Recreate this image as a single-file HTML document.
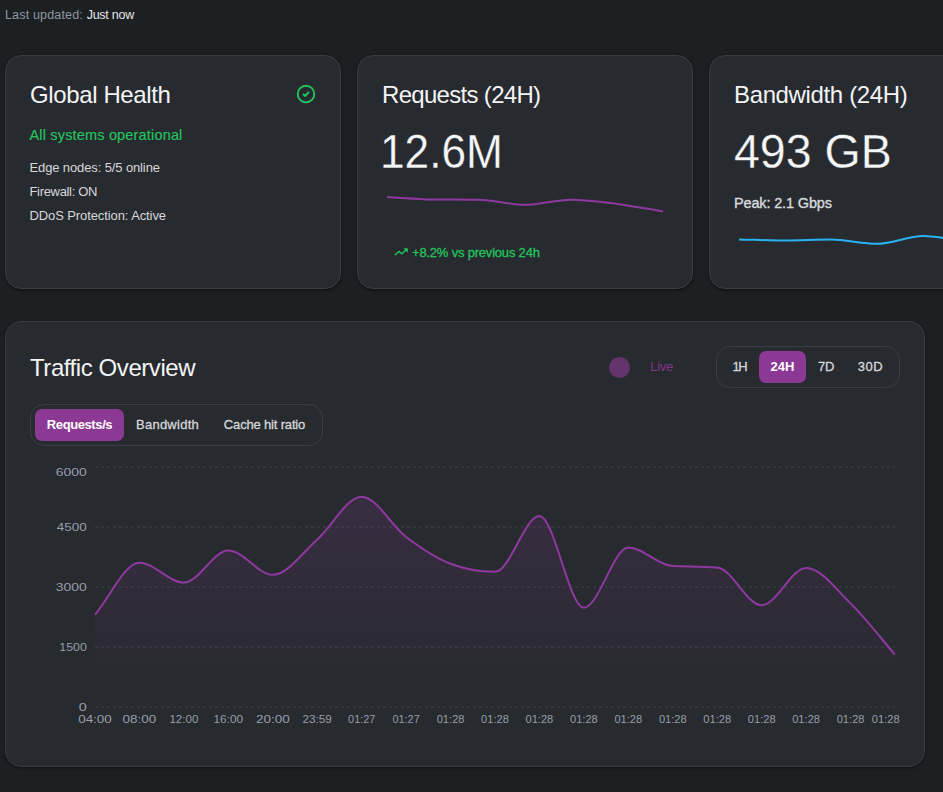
<!DOCTYPE html>
<html lang="en">
<head>
<meta charset="utf-8">
<title>Edge Dashboard</title>
<style>
*{box-sizing:border-box;margin:0;padding:0}
html,body{width:943px;height:792px;overflow:hidden;background:#1c2023}
body{font-family:"Liberation Sans",sans-serif;color:#eceef1;position:relative}
.abs{position:absolute;white-space:nowrap;line-height:1}
.updated{left:5px;top:8.6px;font-size:12.5px;color:#8f97a1;letter-spacing:.17px}
.updated b{font-weight:400;color:#e3e5e8;letter-spacing:-.25px}
.card{position:absolute;top:55px;width:336px;height:234px;background:#272a2f;border:1px solid #393c43;border-radius:16px;box-shadow:0 1px 2px rgba(0,0,0,.3),0 1px 3px 1px rgba(0,0,0,.15)}
.card h2,.panel h2{position:absolute;font-weight:400;color:#f3f4f6;white-space:nowrap;line-height:1}
.big{position:absolute;white-space:nowrap;line-height:1;color:#f5f6f8;font-weight:400;-webkit-text-stroke:.3px #272a2f}
.panel{position:absolute;left:5px;top:321px;width:920px;height:446px;background:#272a2f;border:1px solid #393c43;border-radius:16px;box-shadow:0 1px 2px rgba(0,0,0,.3),0 1px 3px 1px rgba(0,0,0,.15)}
.seg{position:absolute;height:42px;border:1px solid #3b3e45;border-radius:14px;background:#272a2f}
.seg span{position:absolute;top:4px;height:32px;line-height:32px;text-align:center;font-size:13px;color:#d6d8dc;border-radius:7px;white-space:nowrap;-webkit-text-stroke:.3px #d6d8dc}
.seg span.on{background:#8c3996;color:#fff;font-weight:700;-webkit-text-stroke:0}
svg{position:absolute;left:0;top:0;overflow:visible}
.tick{font-size:11.6px;fill:#969eaa;font-family:"Liberation Sans",sans-serif}
</style>
</head>
<body>
<div class="abs updated">Last updated: <b>Just now</b></div>

<!-- Card 1 -->
<div class="card" style="left:5px">
  <h2 style="left:24px;top:27px;font-size:24px;letter-spacing:-.38px">Global Health</h2>
  <svg width="24" height="24" viewBox="-12 -12 24 24" style="left:288px;top:25.8px" fill="none" stroke="#22c55e" stroke-linecap="round" stroke-linejoin="round"><circle cx="0" cy="0" r="8.3" stroke-width="1.85"/><path d="M-2.4 .5L-.8 2L2.5 -1.6" stroke-width="1.95"/></svg>
  <div class="abs" style="left:23.5px;top:71.6px;font-size:14.5px;letter-spacing:.17px;color:#22c55e;-webkit-text-stroke:.15px #22c55e">All systems operational</div>
  <div class="abs" style="left:23.5px;top:105px;font-size:13px;letter-spacing:-.12px;color:#d6d8dc">Edge nodes: 5/5 online</div>
  <div class="abs" style="left:23.5px;top:129px;font-size:13px;letter-spacing:-.33px;color:#d6d8dc">Firewall: ON</div>
  <div class="abs" style="left:23.5px;top:153px;font-size:13px;letter-spacing:-.1px;color:#d6d8dc">DDoS Protection: Active</div>
</div>

<!-- Card 2 -->
<div class="card" style="left:357px">
  <h2 style="left:24px;top:27px;font-size:24px;letter-spacing:-.69px">Requests (24H)</h2>
  <div class="big" style="left:21.8px;top:71px;font-size:49px;transform:scaleX(.903);transform-origin:0 0">12.6M</div>
  <div class="abs" style="left:54px;top:189.5px;font-size:13px;letter-spacing:-.2px;color:#22c55e;-webkit-text-stroke:.3px #22c55e">+8.2% vs previous 24h</div>
</div>

<!-- Card 3 -->
<div class="card" style="left:709px">
  <h2 style="left:24px;top:27px;font-size:24px;letter-spacing:-.36px">Bandwidth (24H)</h2>
  <div class="big" style="left:24.3px;top:71px;font-size:49px;transform:scaleX(.949);transform-origin:0 0">493 GB</div>
  <div class="abs" style="left:24px;top:140px;font-size:14.5px;letter-spacing:-.15px;color:#d8dade;-webkit-text-stroke:.35px #d8dade">Peak: 2.1 Gbps</div>
</div>

<!-- Traffic panel -->
<div class="panel">
  <h2 style="left:24px;top:34px;font-size:24px;letter-spacing:-.43px">Traffic Overview</h2>
  <div class="abs" style="left:603px;top:35px;width:21px;height:21px;border-radius:50%;background:#64346d"></div>
  <div class="abs" style="left:644.3px;top:37.6px;font-size:13px;letter-spacing:-.3px;color:#84378d">Live</div>
  <div class="seg" style="left:710px;top:24px;width:184px">
    <span style="left:4px;width:38px;letter-spacing:-1.5px;text-indent:-1.5px">1H</span>
    <span class="on" style="left:42px;width:47px">24H</span>
    <span style="left:89px;width:40px;letter-spacing:-.4px">7D</span>
    <span style="left:129px;width:49px;letter-spacing:.6px">30D</span>
  </div>
  <div class="seg" style="left:24px;top:82px;width:293px">
    <span class="on" style="left:4px;width:89px;letter-spacing:-.4px">Requests/s</span>
    <span style="left:93px;width:87px;letter-spacing:.26px">Bandwidth</span>
    <span style="left:180px;width:107px;letter-spacing:-.17px">Cache hit ratio</span>
  </div>
</div>

<!-- Overlay SVG: sparklines + main chart (page coordinates) -->
<svg width="943" height="792" viewBox="0 0 943 792">
  <defs>
    <linearGradient id="g" x1="0" y1="466" x2="0" y2="698" gradientUnits="userSpaceOnUse">
      <stop offset="0" stop-color="#993bab" stop-opacity=".175"/>
      <stop offset="1" stop-color="#993bab" stop-opacity="0"/>
    </linearGradient>
  </defs>
  <path id="sp1" fill="none" stroke="#8f39a0" stroke-width="2" stroke-linecap="butt" d="M387.00 196.90 C402.33 197.73 417.67 199.26 433.00 199.40 C448.33 199.54 463.67 199.43 479.00 199.70 C494.33 199.97 509.67 204.80 525.00 204.80 C540.33 204.80 555.67 199.70 571.00 199.70 C586.33 199.70 601.67 201.93 617.00 203.90 C632.33 205.87 647.67 208.97 663.00 211.50"/>
  <path id="sp2" fill="none" stroke="#29b3f4" stroke-width="2" d="M739.00 239.40 C754.33 239.77 769.67 240.50 785.00 240.50 C800.33 240.50 815.67 239.60 831.00 239.60 C846.33 239.60 861.67 243.80 877.00 243.80 C892.33 243.80 907.67 236.10 923.00 236.10 C938.33 236.10 953.67 240.50 969.00 240.50 C984.33 240.50 999.67 238.83 1015.00 238.00"/>
  <!-- trending up icon -->
  <g><path fill="none" stroke="#22c55e" stroke-width="1.4" stroke-linecap="round" stroke-linejoin="round" d="M395.3 254.7L398.8 251.4L401.8 253.8L406 249.9"/><path fill="#22c55e" d="M403.4 248.3H407.8V252.7Z"/></g>
  <!-- grid -->
  <g stroke="#32353c" stroke-width="2" stroke-dasharray="3 3" fill="none">
    <path d="M95 467H895M95 527H895M95 587H895M95 647H895M95 707H895"/>
  </g>
  <path fill="url(#g)" d="M95.00 614.70 C109.81 597.40 124.63 562.80 139.44 562.80 C154.26 562.80 169.07 582.60 183.89 582.60 C198.70 582.60 213.52 550.40 228.33 550.40 C243.15 550.40 257.96 574.80 272.78 574.80 C287.59 574.80 302.41 552.52 317.22 539.50 C332.04 526.48 346.85 496.70 361.67 496.70 C376.48 496.70 391.30 525.82 406.11 537.00 C420.93 548.18 435.74 558.00 450.56 563.80 C465.37 569.60 480.19 571.80 495.00 571.80 C509.81 571.80 524.63 516.10 539.44 516.10 C554.26 516.10 569.07 607.70 583.89 607.70 C598.70 607.70 613.52 547.60 628.33 547.60 C643.15 547.60 657.96 565.37 672.78 566.00 C687.59 566.63 702.41 566.15 717.22 567.40 C732.04 568.65 746.85 605.20 761.67 605.20 C776.48 605.20 791.30 568.00 806.11 568.00 C820.93 568.00 835.74 588.97 850.56 603.40 C865.37 617.83 880.19 637.53 895.00 654.60 L895 706.5 L95 706.5 Z"/>
  <path fill="none" stroke="#8f39a0" stroke-width="2" stroke-linejoin="round" d="M95.00 614.70 C109.81 597.40 124.63 562.80 139.44 562.80 C154.26 562.80 169.07 582.60 183.89 582.60 C198.70 582.60 213.52 550.40 228.33 550.40 C243.15 550.40 257.96 574.80 272.78 574.80 C287.59 574.80 302.41 552.52 317.22 539.50 C332.04 526.48 346.85 496.70 361.67 496.70 C376.48 496.70 391.30 525.82 406.11 537.00 C420.93 548.18 435.74 558.00 450.56 563.80 C465.37 569.60 480.19 571.80 495.00 571.80 C509.81 571.80 524.63 516.10 539.44 516.10 C554.26 516.10 569.07 607.70 583.89 607.70 C598.70 607.70 613.52 547.60 628.33 547.60 C643.15 547.60 657.96 565.37 672.78 566.00 C687.59 566.63 702.41 566.15 717.22 567.40 C732.04 568.65 746.85 605.20 761.67 605.20 C776.48 605.20 791.30 568.00 806.11 568.00 C820.93 568.00 835.74 588.97 850.56 603.40 C865.37 617.83 880.19 637.53 895.00 654.60"/>
  <g class="tick" text-anchor="end" lengthAdjust="spacingAndGlyphs">
    <text x="86.8" y="475.8" textLength="31" lengthAdjust="spacingAndGlyphs">6000</text>
    <text x="86.8" y="530.8" textLength="30" lengthAdjust="spacingAndGlyphs">4500</text>
    <text x="86.8" y="590.8" textLength="31" lengthAdjust="spacingAndGlyphs">3000</text>
    <text x="86.8" y="650.8" textLength="27.5" lengthAdjust="spacingAndGlyphs">1500</text>
    <text x="86.8" y="710.8" textLength="8" lengthAdjust="spacingAndGlyphs">0</text>
  </g>
  <g class="tick" text-anchor="middle">
    <text x="95.0" y="722.9" textLength="33.7" lengthAdjust="spacingAndGlyphs">04:00</text>
    <text x="139.4" y="722.9" textLength="33.7" lengthAdjust="spacingAndGlyphs">08:00</text>
    <text x="183.9" y="722.9" textLength="28.9" lengthAdjust="spacingAndGlyphs">12:00</text>
    <text x="228.3" y="722.9" textLength="29.5" lengthAdjust="spacingAndGlyphs">16:00</text>
    <text x="272.8" y="722.9" textLength="33.7" lengthAdjust="spacingAndGlyphs">20:00</text>
    <text x="317.2" y="722.9" textLength="29.3" lengthAdjust="spacingAndGlyphs">23:59</text>
    <text x="361.7" y="722.9" textLength="27.2" lengthAdjust="spacingAndGlyphs">01:27</text>
    <text x="406.1" y="722.9" textLength="27.2" lengthAdjust="spacingAndGlyphs">01:27</text>
    <text x="450.6" y="722.9" textLength="27.8" lengthAdjust="spacingAndGlyphs">01:28</text>
    <text x="495.0" y="722.9" textLength="27.8" lengthAdjust="spacingAndGlyphs">01:28</text>
    <text x="539.4" y="722.9" textLength="27.8" lengthAdjust="spacingAndGlyphs">01:28</text>
    <text x="583.9" y="722.9" textLength="27.8" lengthAdjust="spacingAndGlyphs">01:28</text>
    <text x="628.3" y="722.9" textLength="27.8" lengthAdjust="spacingAndGlyphs">01:28</text>
    <text x="672.8" y="722.9" textLength="27.8" lengthAdjust="spacingAndGlyphs">01:28</text>
    <text x="717.2" y="722.9" textLength="27.8" lengthAdjust="spacingAndGlyphs">01:28</text>
    <text x="761.7" y="722.9" textLength="27.8" lengthAdjust="spacingAndGlyphs">01:28</text>
    <text x="806.1" y="722.9" textLength="27.8" lengthAdjust="spacingAndGlyphs">01:28</text>
    <text x="850.6" y="722.9" textLength="27.8" lengthAdjust="spacingAndGlyphs">01:28</text>
    <text x="885.7" y="722.9" textLength="27.8" lengthAdjust="spacingAndGlyphs">01:28</text>
  </g>
</svg>
</body>
</html>
